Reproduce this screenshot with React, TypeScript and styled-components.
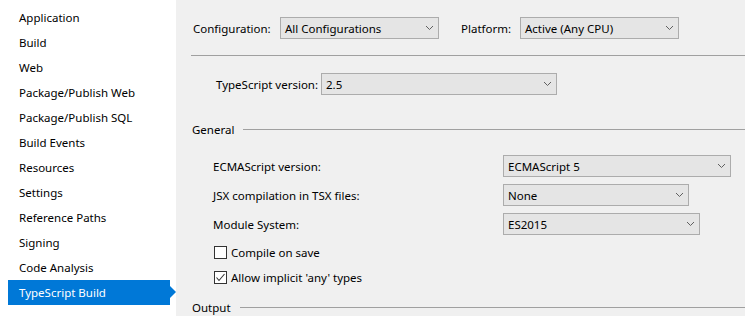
import { ReactElement } from "react";
import styled, { createGlobalStyle } from "styled-components";

const GlobalStyle = createGlobalStyle`
  html, body {
    margin: 0;
    padding: 0;
    background: #f0f0f0;
  }
  body {
    font-family: "Segoe UI", "Noto Sans", sans-serif;
    font-size: 11.5px;
    color: #000;
  }
`;

const Page = styled.div`
  display: flex;
  width: 745px;
  height: 316px;
  overflow: hidden;
`;

const Sidebar = styled.ul`
  width: 176px;
  flex-shrink: 0;
  margin: 0;
  padding: 5px 0 0 0;
  list-style: none;
  background: #fff;
`;

const NavItem = styled.li<{ $active?: boolean }>`
  position: relative;
  height: 25px;
  line-height: 25px;
  width: 162px;
  margin-left: 8px;
  padding-left: 11px;
  box-sizing: border-box;
  white-space: nowrap;
  background: ${({ $active }) => ($active ? "#0078d7" : "transparent")};
  color: ${({ $active }) => ($active ? "#fff" : "#000")};

  &::after {
    content: "";
    display: ${({ $active }) => ($active ? "block" : "none")};
    position: absolute;
    right: -6px;
    top: 6px;
    border-top: 6px solid transparent;
    border-bottom: 6px solid transparent;
    border-left: 6px solid #0078d7;
  }
`;

const Main = styled.div`
  flex: 1;
  display: flex;
  flex-direction: column;
  padding: 17px 0 0 15px;
`;

const Row = styled.div<{ $indent?: number }>`
  display: flex;
  align-items: center;
  height: 22px;
  padding-left: ${({ $indent }) => $indent ?? 0}px;
`;

const Label = styled.span<{ $width: number }>`
  width: ${({ $width }) => $width}px;
  flex-shrink: 0;
  white-space: nowrap;
`;

const Combo = styled.div<{ $width: number }>`
  display: flex;
  align-items: center;
  justify-content: space-between;
  width: ${({ $width }) => $width}px;
  height: 22px;
  box-sizing: border-box;
  padding: 0 4px 0 4px;
  background: #e5e5e5;
  border: 1px solid #acacac;
  white-space: nowrap;
`;

const Divider = styled.div`
  height: 1px;
  background: #a0a0a0;
  margin-top: 16px;
`;

const SectionHeader = styled.div<{ $top: number }>`
  display: flex;
  align-items: center;
  height: 16px;
  margin-top: ${({ $top }) => $top}px;
  padding-left: 1px;

  &::after {
    content: "";
    flex: 1;
    height: 1px;
    margin-left: 9px;
    background: #a0a0a0;
  }
`;

const Settings = styled.div`
  display: grid;
  grid-template-columns: 290px auto;
  row-gap: 7px;
  margin-top: 18px;
  padding-left: 22px;
  justify-items: start;
  align-items: center;
`;

const CheckList = styled.div`
  display: flex;
  flex-direction: column;
  margin-top: 5px;
  padding-left: 23px;
`;

const CheckRow = styled.label`
  display: flex;
  align-items: center;
  gap: 4px;
  height: 25px;
`;

const Box = styled.span`
  display: flex;
  align-items: center;
  justify-content: center;
  width: 13px;
  height: 13px;
  box-sizing: border-box;
  border: 1px solid #333;
  background: #fff;
`;

const Chevron = () => (
  <svg width="9" height="6" viewBox="0 0 9 6">
    <polyline points="1,1 4.5,4.5 8,1" fill="none" stroke="#606060" strokeWidth="1" />
  </svg>
);

const Check = () => (
  <svg width="11" height="11" viewBox="0 0 11 11">
    <polyline points="1.5,5.5 4,8.5 9.5,2" fill="none" stroke="#333" strokeWidth="1.1" />
  </svg>
);

type SelectProps = { value: string; width: number };

const Select = ({ value, width }: SelectProps): ReactElement => (
  <Combo $width={width}>
    <span>{value}</span>
    <Chevron />
  </Combo>
);

const navItems = [
  "Application",
  "Build",
  "Web",
  "Package/Publish Web",
  "Package/Publish SQL",
  "Build Events",
  "Resources",
  "Settings",
  "Reference Paths",
  "Signing",
  "Code Analysis",
  "TypeScript Build",
];

export default function App(): ReactElement {
  return (
    <>
      <GlobalStyle />
      <Page>
        <Sidebar>
          {navItems.map((item) => (
            <NavItem key={item} $active={item === "TypeScript Build"}>
              {item}
            </NavItem>
          ))}
        </Sidebar>

        <Main>
          <Row $indent={2}>
            <Label $width={87}>Configuration:</Label>
            <Select value="All Configurations" width={159} />
            <Label $width={59} style={{ marginLeft: 22 }}>
              Platform:
            </Label>
            <Select value="Active (Any CPU)" width={159} />
          </Row>

          <Divider />

          <Row $indent={25} style={{ marginTop: 17 }}>
            <Label $width={105}>TypeScript version:</Label>
            <Select value="2.5" width={236} />
          </Row>

          <SectionHeader $top={26}>General</SectionHeader>

          <Settings>
            <span>ECMAScript version:</span>
            <Select value="ECMAScript 5" width={228} />
            <span>JSX compilation in TSX files:</span>
            <Select value="None" width={186} />
            <span>Module System:</span>
            <Select value="ES2015" width={197} />
          </Settings>

          <CheckList>
            <CheckRow>
              <Box />
              Compile on save
            </CheckRow>
            <CheckRow>
              <Box>
                <Check />
              </Box>
              Allow implicit 'any' types
            </CheckRow>
          </CheckList>

          <SectionHeader $top={9}>Output</SectionHeader>
        </Main>
      </Page>
    </>
  );
}
